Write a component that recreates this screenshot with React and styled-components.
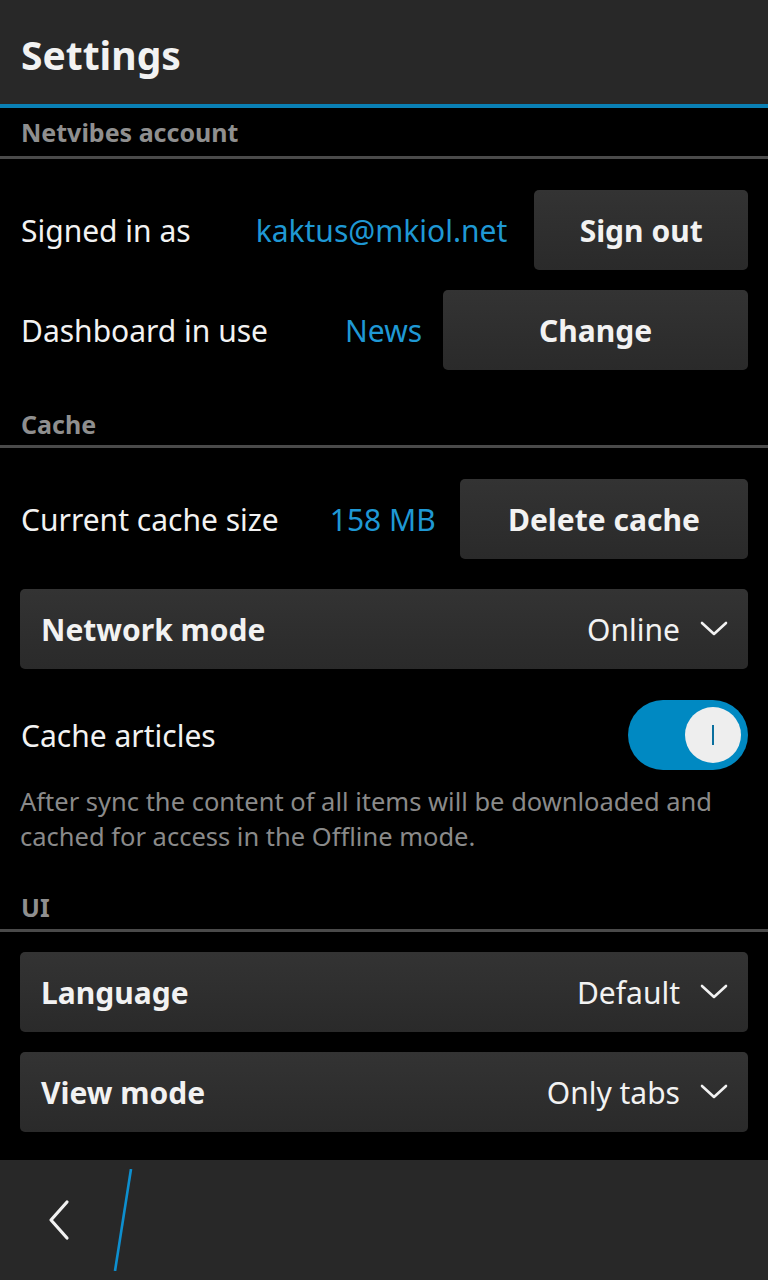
import React from "react";
import styled, { createGlobalStyle } from "styled-components";

const GlobalStyle = createGlobalStyle`
  html, body {
    margin: 0;
    padding: 0;
    background: #000;
  }
  body {
    font-family: "Noto Sans", "Open Sans", sans-serif;
    color: #f2f2f2;
  }
`;

const Page = styled.div`
  width: 768px;
  height: 1280px;
  display: flex;
  flex-direction: column;
  background: #000;
  overflow: hidden;
`;

const TitleBar = styled.header`
  height: 104px;
  background: #282828;
  border-bottom: 4px solid #0a80b5;
  display: flex;
  align-items: center;
  padding: 0 21px;
  box-sizing: content-box;
`;

const Title = styled.h1`
  margin: 0;
  font-size: 39px;
  font-weight: 700;
  color: #f2f2f2;
  padding-top: 4px;
`;

const Content = styled.main`
  flex: 1;
  display: flex;
  flex-direction: column;
`;

const SectionHeader = styled.div`
  height: ${(p) => p.h || 48}px;
  display: flex;
  align-items: center;
  padding: 0 21px;
  font-size: 25px;
  font-weight: 700;
  color: #8f8f8f;
  border-bottom: 3px solid #4a4a4a;
  box-sizing: border-box;
`;

const HeaderText = styled.span`
  padding-top: ${(p) => p.top || 0}px;
`;

const Row = styled.div`
  display: flex;
  align-items: center;
  padding: 0 20px 0 21px;
  height: ${(p) => p.h || 80}px;
  margin-top: ${(p) => p.top || 0}px;
`;

const Label = styled.span`
  font-size: 30px;
  color: #f2f2f2;
  flex: ${(p) => (p.grow ? 1 : "none")};
`;

const Value = styled.span`
  font-size: 30px;
  color: #1f98d4;
  margin-left: ${(p) => p.gap}px;
  margin-right: ${(p) => p.right}px;
`;

const Button = styled.button`
  flex: 1;
  height: 80px;
  border: none;
  border-radius: 5px;
  background: linear-gradient(#333333, #2a2a2a);
  color: #f2f2f2;
  font-family: inherit;
  font-size: 30px;
  font-weight: 700;
  padding: 0;
`;

const Dropdown = styled.div`
  margin: ${(p) => p.top || 0}px 20px 0 20px;
  height: 80px;
  border-radius: 5px;
  background: linear-gradient(#333333, #2a2a2a);
  display: flex;
  align-items: center;
  padding: 0 20px 0 21px;
`;

const DropLabel = styled.span`
  flex: 1;
  font-size: 30px;
  font-weight: 700;
  color: #f2f2f2;
`;

const DropValue = styled.span`
  font-size: 30px;
  color: #f2f2f2;
  margin-right: 20px;
`;

const Toggle = styled.div`
  width: 120px;
  height: 70px;
  border-radius: 35px;
  background: #0089c2;
  display: flex;
  align-items: center;
  justify-content: flex-end;
  padding-right: 7px;
  box-sizing: border-box;
`;

const Knob = styled.div`
  width: 56px;
  height: 56px;
  border-radius: 50%;
  background: #eeeeee;
  display: flex;
  align-items: center;
  justify-content: center;
  &::after {
    content: "";
    width: 2px;
    height: 20px;
    background: #0a6f9e;
  }
`;

const Note = styled.p`
  margin: 14px 21px 0 20px;
  font-size: 25.5px;
  line-height: 35px;
  color: #8a8a8a;
`;

const ActionBar = styled.footer`
  height: 120px;
  background: #282828;
  display: flex;
  align-items: center;
  padding-left: 46px;
  gap: 40px;
`;

const Chevron = () => (
  <svg width="28" height="16" viewBox="0 0 28 16">
    <path d="M2 2 L14 13 L26 2" fill="none" stroke="#f2f2f2" strokeWidth="2.6" strokeLinecap="round" strokeLinejoin="round" />
  </svg>
);

const Back = () => (
  <svg width="26" height="42" viewBox="0 0 26 42">
    <path d="M21 3 L5 21 L21 39" fill="none" stroke="#f2f2f2" strokeWidth="3.2" strokeLinecap="round" strokeLinejoin="round" />
  </svg>
);

const Slash = () => (
  <svg width="22" height="102" viewBox="0 0 22 102">
    <path d="M19 0 L3 102" stroke="#0d8fcf" strokeWidth="2.6" />
  </svg>
);

export default function App() {
  return (
    <Page>
      <GlobalStyle />
      <TitleBar>
        <Title>Settings</Title>
      </TitleBar>
      <Content>
        <SectionHeader h={51}>Netvibes account</SectionHeader>
        <Row top={31}>
          <Label>Signed in as</Label>
          <Value gap={65} right={27}>kaktus@mkiol.net</Value>
          <Button>Sign out</Button>
        </Row>
        <Row top={20}>
          <Label>Dashboard in use</Label>
          <Value gap={77} right={21}>News</Value>
          <Button>Change</Button>
        </Row>
        <SectionHeader h={78}>
          <HeaderText top={32}>Cache</HeaderText>
        </SectionHeader>
        <Row top={31}>
          <Label>Current cache size</Label>
          <Value gap={51} right={24}>158 MB</Value>
          <Button>Delete cache</Button>
        </Row>
        <Dropdown top={30}>
          <DropLabel>Network mode</DropLabel>
          <DropValue>Online</DropValue>
          <Chevron />
        </Dropdown>
        <Row top={31} h={70}>
          <Label grow>Cache articles</Label>
          <Toggle>
            <Knob />
          </Toggle>
        </Row>
        <Note>
          After sync the content of all items will be downloaded and cached for access in the Offline mode.
        </Note>
        <SectionHeader h={78}>
          <HeaderText top={30}>UI</HeaderText>
        </SectionHeader>
        <Dropdown top={20}>
          <DropLabel>Language</DropLabel>
          <DropValue>Default</DropValue>
          <Chevron />
        </Dropdown>
        <Dropdown top={20}>
          <DropLabel>View mode</DropLabel>
          <DropValue>Only tabs</DropValue>
          <Chevron />
        </Dropdown>
      </Content>
      <ActionBar>
        <Back />
        <Slash />
      </ActionBar>
    </Page>
  );
}
